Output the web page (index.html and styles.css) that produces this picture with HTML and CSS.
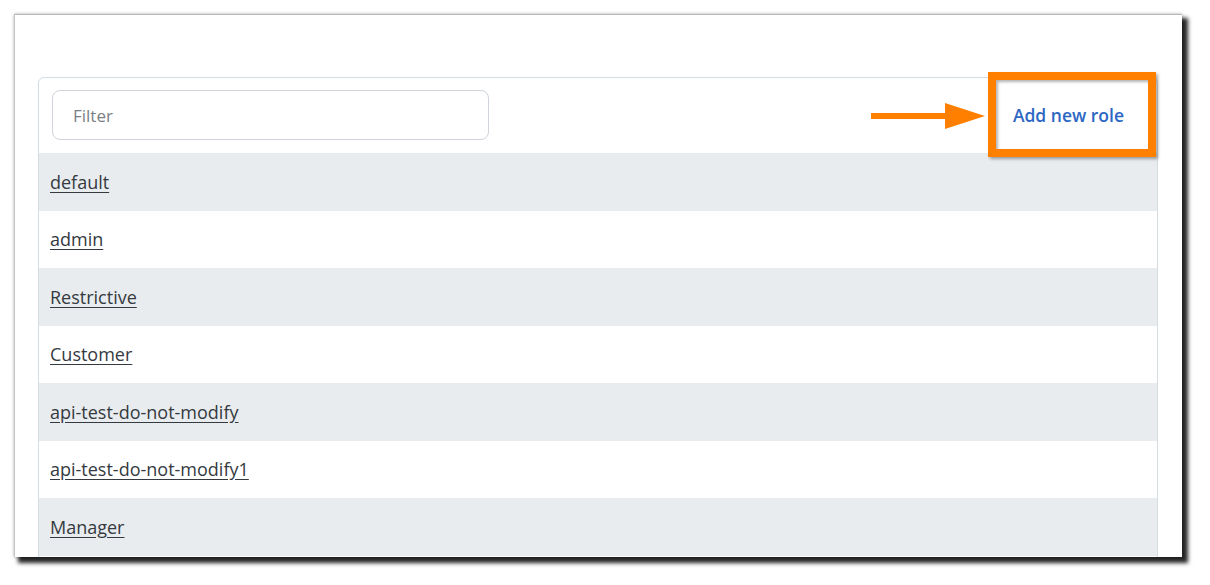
FILE: index.html
```html
<!DOCTYPE html>
<html lang="en">
<head>
<meta charset="utf-8">
<title>Roles</title>
<link rel="stylesheet" href="styles.css">
</head>
<body>
<div class="frame">
  <div class="card">
    <div class="card-header">
      <input class="filter" type="text" placeholder="Filter">
      <a class="add-link" href="#">Add new role</a>
      <svg class="arrow" width="120" height="30" viewBox="0 0 120 30">
        <path d="M4 12 H78 V2 L118 15 L78 28 V18 H4 Z" fill="#ff8000"/>
      </svg>
      <div class="highlight"></div>
    </div>
    <ul class="role-list">
      <li class="role"><a href="#">default</a></li>
      <li class="role"><a href="#">admin</a></li>
      <li class="role"><a href="#">Restrictive</a></li>
      <li class="role"><a href="#">Customer</a></li>
      <li class="role"><a href="#">api-test-do-not-modify</a></li>
      <li class="role"><a href="#">api-test-do-not-modify1</a></li>
      <li class="role"><a href="#">Manager</a></li>
    </ul>
  </div>
</div>
</body>
</html>
```

FILE: styles.css
```css
html, body {
  margin: 0;
  padding: 0;
  background: #ffffff;
}

body {
  font-family: "Open Sans", "Liberation Sans", sans-serif;
  padding: 14px 0 0 14px;
  min-height: 585px;
  box-sizing: border-box;
}

.frame {
  width: 1168px;
  height: 543px;
  background: #ffffff;
  overflow: hidden;
  box-sizing: border-box;
  padding: 62px 24px 0 23px;
  border-top: 1px solid #b8b8b8;
  border-left: 1px solid #c4c4c4;
  box-shadow: 0 0 3px rgba(0, 0, 0, 0.3), 5px 5px 4px 1px rgba(0, 0, 0, 0.85);
}

.card {
  border: 1px solid #d3dde2;
  border-radius: 6px;
  background: #ffffff;
  padding-bottom: 20px;
}

.card-header {
  position: relative;
  display: flex;
  align-items: center;
  justify-content: space-between;
  padding: 12px 33px 13px 13px;
}

.filter {
  width: 437px;
  height: 50px;
  box-sizing: border-box;
  border: 1px solid #ced4da;
  border-radius: 8px;
  padding: 0 20px;
  font-family: inherit;
  font-size: 17px;
  color: #495057;
  outline: none;
}

.filter::placeholder {
  color: #7a7f85;
}

.add-link {
  color: #2d67c4;
  font-size: 17.5px;
  font-weight: 600;
  text-decoration: none;
}

.arrow {
  position: absolute;
  left: 828px;
  top: 23px;
}

.highlight {
  position: absolute;
  left: 949px;
  top: -6px;
  width: 168px;
  height: 85px;
  box-sizing: border-box;
  border: 8px solid #ff8000;
  box-shadow: 2px 2px 3px rgba(0, 0, 0, 0.35), inset 2px 2px 3px rgba(0, 0, 0, 0.3);
}

.role-list {
  list-style: none;
  margin: 0;
  padding: 0;
}

.role {
  height: 57.5px;
  display: flex;
  align-items: center;
  padding: 0 11px;
}

.role:nth-child(odd) {
  background: #e9ecef;
}

.role a {
  color: #343a40;
  font-size: 18px;
  text-decoration: underline;
  text-underline-offset: 3px;
}
```
